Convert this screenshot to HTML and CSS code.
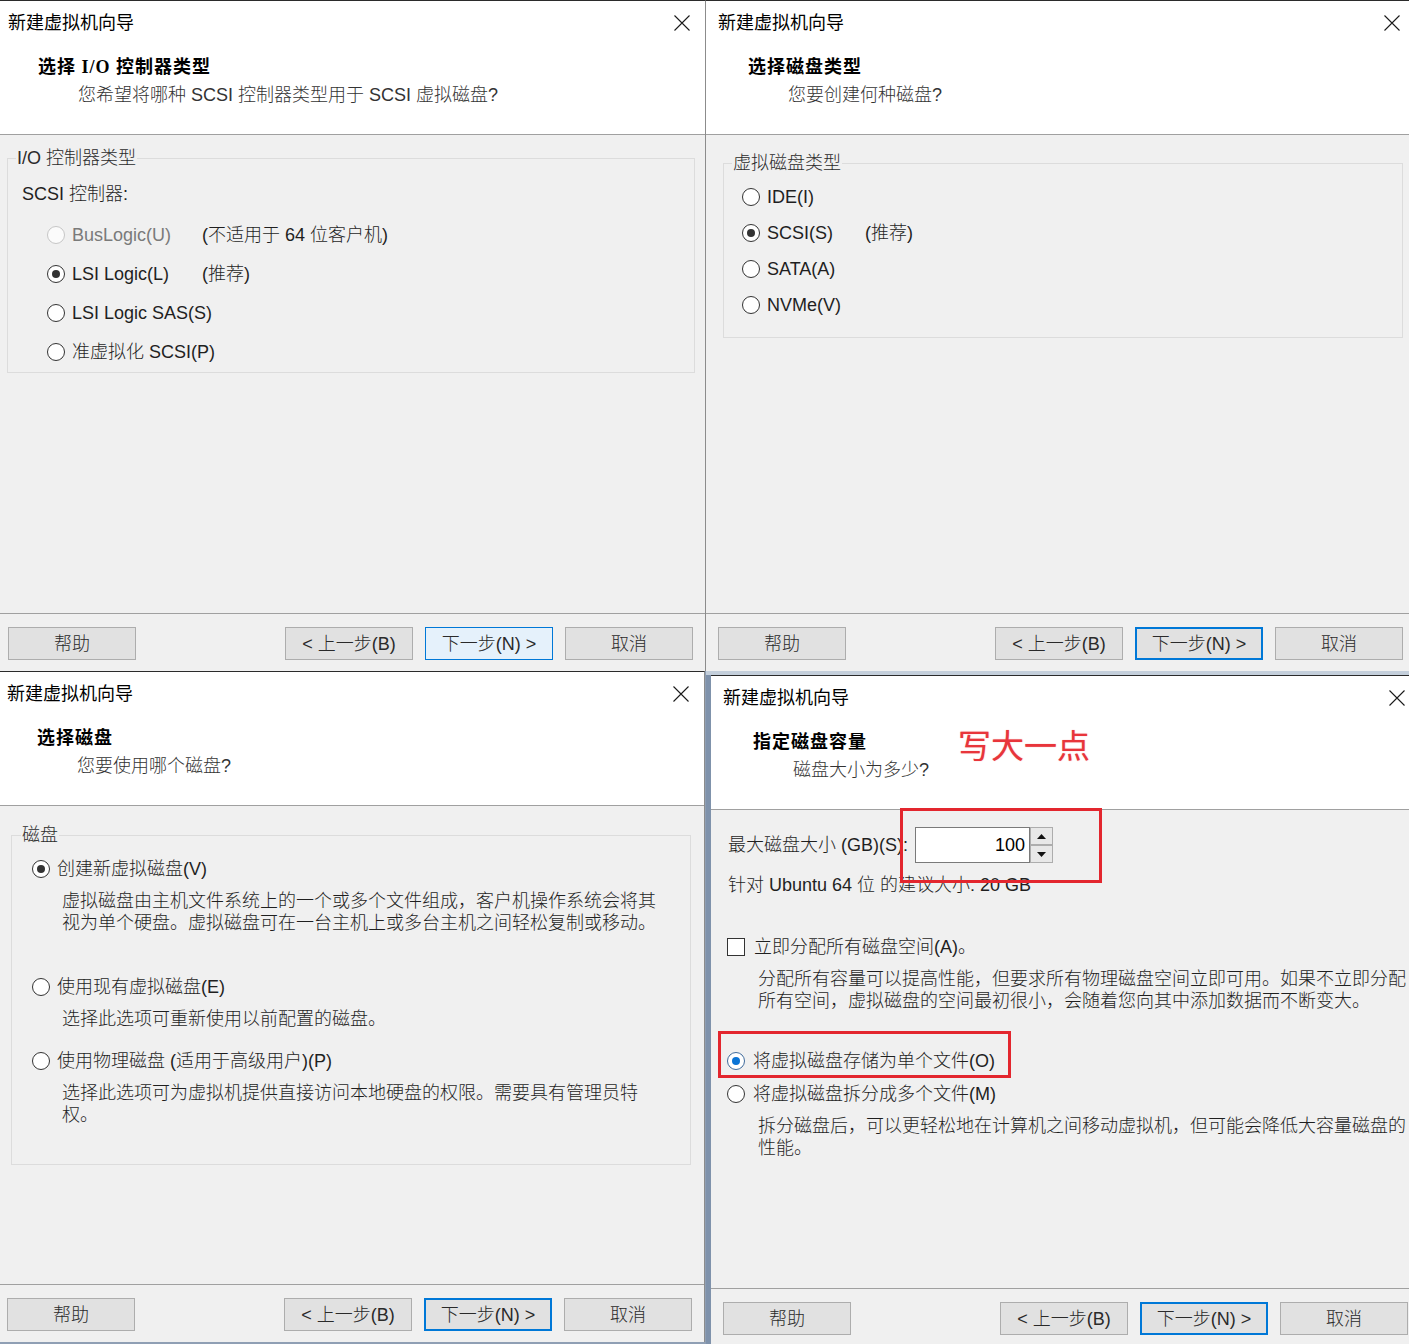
FILE: index.html
```html
<!DOCTYPE html>
<html lang="zh-CN">
<head>
    <meta charset="UTF-8">
    <meta name="viewport" content="width=device-width, initial-scale=1.0">
    <title>新建虚拟机向导</title>
    <link rel="stylesheet" href="styles.css">
</head>
<body>
    <div class="sheet">
        <!-- step: I/O controller -->
        <div class="cell cell-tl">
            <section class="wizard wizard-tl">
                <header class="wiz-head">
                    <div class="titlebar">
                        <span class="title">新建虚拟机向导</span>
                        <svg class="close" width="16" height="16" viewBox="0 0 16 16"><path d="M0.5 0.5L15.5 15.5M15.5 0.5L0.5 15.5"/></svg>
                    </div>
                    <h2 class="step-title">选择 I/O 控制器类型</h2>
                    <p class="step-sub">您希望将哪种 SCSI 控制器类型用于 SCSI 虚拟磁盘?</p>
                </header>
                <div class="wiz-body body-io">
                    <fieldset class="group group-io">
                        <legend>I/O 控制器类型</legend>
                        <div class="group-caption">SCSI 控制器:</div>
                        <div class="choices choices-io">
                            <label class="choice is-disabled"><input type="radio" name="io" disabled><span class="choice-label">BusLogic(U)</span><span class="choice-note">(不适用于 64 位客户机)</span></label>
                            <label class="choice"><input type="radio" name="io" checked><span class="choice-label">LSI Logic(L)</span><span class="choice-note">(推荐)</span></label>
                            <label class="choice"><input type="radio" name="io"><span class="choice-label">LSI Logic SAS(S)</span></label>
                            <label class="choice"><input type="radio" name="io"><span class="choice-label">准虚拟化 SCSI(P)</span></label>
                        </div>
                    </fieldset>
                </div>
                <footer class="wiz-foot">
                    <button class="btn">帮助</button>
                    <span class="spacer"></span>
                    <button class="btn">&lt; 上一步(B)</button>
                    <button class="btn btn-default">下一步(N) &gt;</button>
                    <button class="btn">取消</button>
                </footer>
            </section>
        </div>

        <!-- step: disk type -->
        <div class="cell cell-tr">
            <section class="wizard wizard-tr">
                <header class="wiz-head">
                    <div class="titlebar">
                        <span class="title">新建虚拟机向导</span>
                        <svg class="close" width="16" height="16" viewBox="0 0 16 16"><path d="M0.5 0.5L15.5 15.5M15.5 0.5L0.5 15.5"/></svg>
                    </div>
                    <h2 class="step-title">选择磁盘类型</h2>
                    <p class="step-sub">您要创建何种磁盘?</p>
                </header>
                <div class="wiz-body body-disk">
                    <fieldset class="group group-disk">
                        <legend>虚拟磁盘类型</legend>
                        <div class="choices choices-disk">
                            <label class="choice"><input type="radio" name="bus"><span class="choice-label">IDE(I)</span></label>
                            <label class="choice"><input type="radio" name="bus" checked><span class="choice-label">SCSI(S)</span><span class="choice-note">(推荐)</span></label>
                            <label class="choice"><input type="radio" name="bus"><span class="choice-label">SATA(A)</span></label>
                            <label class="choice"><input type="radio" name="bus"><span class="choice-label">NVMe(V)</span></label>
                        </div>
                    </fieldset>
                </div>
                <footer class="wiz-foot">
                    <button class="btn">帮助</button>
                    <span class="spacer"></span>
                    <button class="btn">&lt; 上一步(B)</button>
                    <button class="btn btn-default">下一步(N) &gt;</button>
                    <button class="btn">取消</button>
                </footer>
            </section>
        </div>

        <!-- step: pick disk -->
        <div class="cell cell-bl">
            <section class="wizard wizard-bl">
                <header class="wiz-head">
                    <div class="titlebar">
                        <span class="title">新建虚拟机向导</span>
                        <svg class="close" width="16" height="16" viewBox="0 0 16 16"><path d="M0.5 0.5L15.5 15.5M15.5 0.5L0.5 15.5"/></svg>
                    </div>
                    <h2 class="step-title">选择磁盘</h2>
                    <p class="step-sub">您要使用哪个磁盘?</p>
                </header>
                <div class="wiz-body body-pick">
                    <fieldset class="group group-pick">
                        <legend>磁盘</legend>
                        <div class="option">
                            <label class="choice"><input type="radio" name="disk" checked><span>创建新虚拟磁盘(V)</span></label>
                            <p class="option-desc">虚拟磁盘由主机文件系统上的一个或多个文件组成，客户机操作系统会将其视为单个硬盘。虚拟磁盘可在一台主机上或多台主机之间轻松复制或移动。</p>
                        </div>
                        <div class="option option-2">
                            <label class="choice"><input type="radio" name="disk"><span>使用现有虚拟磁盘(E)</span></label>
                            <p class="option-desc">选择此选项可重新使用以前配置的磁盘。</p>
                        </div>
                        <div class="option option-3">
                            <label class="choice"><input type="radio" name="disk"><span>使用物理磁盘 (适用于高级用户)(P)</span></label>
                            <p class="option-desc">选择此选项可为虚拟机提供直接访问本地硬盘的权限。需要具有管理员特权。</p>
                        </div>
                    </fieldset>
                </div>
                <footer class="wiz-foot">
                    <button class="btn">帮助</button>
                    <span class="spacer"></span>
                    <button class="btn">&lt; 上一步(B)</button>
                    <button class="btn btn-default">下一步(N) &gt;</button>
                    <button class="btn">取消</button>
                </footer>
            </section>
        </div>

        <!-- step: disk size -->
        <div class="cell cell-br">
            <section class="wizard wizard-br">
                <header class="wiz-head">
                    <div class="titlebar">
                        <span class="title">新建虚拟机向导</span>
                        <svg class="close" width="16" height="16" viewBox="0 0 16 16"><path d="M0.5 0.5L15.5 15.5M15.5 0.5L0.5 15.5"/></svg>
                    </div>
                    <h2 class="step-title">指定磁盘容量</h2>
                    <p class="step-sub">磁盘大小为多少?</p>
                </header>
                <div class="wiz-body body-size">
                    <div class="size-row">
                        <span class="size-label">最大磁盘大小 (GB)(S):</span>
                        <div class="size-field">
                            <input class="size-input" type="text" value="100">
                            <div class="spin">
                                <span><svg width="9" height="5" viewBox="0 0 9 5"><path d="M0 5L4.5 0L9 5Z"/></svg></span>
                                <span><svg width="9" height="5" viewBox="0 0 9 5"><path d="M0 0L4.5 5L9 0Z"/></svg></span>
                            </div>
                        </div>
                    </div>
                    <div class="size-hint">针对 Ubuntu 64 位 的建议大小: 20 GB</div>

                    <label class="choice check-row"><input type="checkbox"><span>立即分配所有磁盘空间(A)。</span></label>
                    <p class="size-desc">分配所有容量可以提高性能，但要求所有物理磁盘空间立即可用。如果不立即分配所有空间，虚拟磁盘的空间最初很小，会随着您向其中添加数据而不断变大。</p>

                    <label class="choice store-1 is-focus"><input type="radio" name="store" checked><span>将虚拟磁盘存储为单个文件(O)</span></label>
                    <label class="choice store-2"><input type="radio" name="store"><span>将虚拟磁盘拆分成多个文件(M)</span></label>
                    <p class="size-desc">拆分磁盘后，可以更轻松地在计算机之间移动虚拟机，但可能会降低大容量磁盘的性能。</p>
                </div>
                <footer class="wiz-foot">
                    <button class="btn">帮助</button>
                    <span class="spacer"></span>
                    <button class="btn">&lt; 上一步(B)</button>
                    <button class="btn btn-default">下一步(N) &gt;</button>
                    <button class="btn">取消</button>
                </footer>

                <!-- hand-drawn annotations -->
                <p class="note-big">写大一点</p>
                <div class="mark mark-size"></div>
                <div class="mark mark-file"></div>
            </section>
        </div>
    </div>
</body>
</html>
```

FILE: styles.css
```css
* { box-sizing: border-box; }
html, body { margin: 0; padding: 0; }
body {
    width: 1409px;
    height: 1344px;
    overflow: hidden;
    font-family: "Liberation Sans", "Noto Sans CJK SC", sans-serif;
    font-size: 18px;
    font-weight: 300;
    color: #1f1f1f;
    background: #f0f0f0;
}
.sheet {
    display: grid;
    grid-template-columns: 706px 703px;
    grid-template-rows: 671px 673px;
}
.cell { overflow: hidden; position: relative; }
.cell-bl { background: #8f9fb4; }
.cell-br {
    padding: 4px 0 0 5px;
    background: linear-gradient(#c4cfdb 0, #c4cfdb 4px, #7f92ab 4px);
}

/* dialog frame */
.wizard {
    --dx: 0px;
    position: relative;
    width: calc(706px + var(--dx));
    height: 671px;
    display: flex;
    flex-direction: column;
    background: #f0f0f0;
    border-top: 1px solid #2b2b2b;
    border-right: 1px solid #8c8c8c;
}
.wizard-tr, .wizard-br { --dx: 4px; }
.wizard-bl { --dx: -1px; }

.wiz-head {
    flex: none;
    height: 134px;
    background: #fff;
    border-bottom: 1px solid #a0a0a0;
}
.titlebar {
    display: flex;
    align-items: center;
    height: 43px;
    padding: 0 15px 0 calc(8px + var(--dx));
}
.title { line-height: 24px; font-weight: 400; color: #000; }
.close { margin-left: auto; fill: none; stroke: #1a1a1a; stroke-width: 1.1; }
.step-title {
    margin: 9px 0 0 calc(38px + var(--dx));
    font: 700 18px/28px "Liberation Serif", "Noto Sans CJK SC", serif;
    letter-spacing: 1px;
    color: #000;
}
.step-sub {
    margin: 0 0 0 calc(78px + var(--dx));
    line-height: 28px;
    color: #333;
}

.wiz-body { flex: 1; }

.wiz-foot {
    flex: none;
    height: 58px;
    display: flex;
    align-items: flex-start;
    gap: 12px;
    padding: 13px 12px 0 calc(8px + var(--dx));
    border-top: 1px solid #a0a0a0;
}
.spacer { flex: 1; }
.btn {
    width: 128px;
    height: 33px;
    padding: 0;
    font: inherit;
    line-height: 24px;
    color: #2a2a2a;
    background: #e1e1e1;
    border: 1px solid #adadad;
}
.btn-default { border: 2px solid #0078d7; }
.wizard-tl .btn-default { border-width: 1px; background: #e5f1fb; }

/* group boxes */
.group {
    margin: 0;
    min-width: 0;
    border: 1px solid #dcdcdc;
}
.group legend { padding: 0 1px; line-height: 22px; color: #2a2a2a; }

.choice { display: flex; align-items: center; line-height: 24px; white-space: nowrap; }
.choice input {
    -webkit-appearance: none;
    appearance: none;
    flex: none;
    display: grid;
    place-content: center;
    width: 18px;
    height: 18px;
    margin: 0 7px 0 0;
    background: #fff;
    border: 1px solid #333;
}
.choice input[type="radio"] { border-radius: 50%; }
.choice input[type="radio"]:checked::before {
    content: "";
    width: 8px;
    height: 8px;
    border-radius: 50%;
    background: #333;
}
.choice.is-disabled .choice-label { color: #7a7a7a; }
.choice.is-disabled input { border-color: #c6c6c6; background: #fbfbfb; }
.choice.is-focus input { border-color: #3f6b9c; }
.choice.is-focus input:checked::before { background: #0a74d6; }

/* I/O controller page */
.body-io { padding: 12px 10px 0 7px; }
.group-io { padding: 13px 0 1px 14px; }
.group-io legend { margin-left: -6px; }
.group-caption { line-height: 24px; }
.choices-io { margin-top: 9px; }
.choices-io .choice { height: 39px; padding-left: 25px; }
.choices-io .choice-label { min-width: 130px; }

/* disk type page */
.body-disk { padding: 17px 12px 0 17px; }
.group-disk { padding: 5px 0 14px 18px; }
.group-disk legend { margin-left: -10px; }
.choices-disk .choice { height: 36px; }
.choices-disk .choice-label { min-width: 98px; }

/* pick disk page */
.body-pick { padding: 18px 13px 0 11px; }
.group-pick { padding: 11px 0 38px 20px; }
.group-pick legend { margin-left: -11px; }
.option .choice { height: 24px; }
.option-2 { margin-top: 41px; }
.option-3 { margin-top: 19px; }
.option-desc {
    width: 600px;
    margin: 9px 0 0 30px;
    line-height: 22px;
}

/* disk size page */
.body-size { padding: 17px 0 0 17px; }
.size-row { display: flex; align-items: center; height: 36px; }
.size-label { width: 187px; line-height: 24px; }
.size-field { display: flex; }
.size-input {
    width: 115px;
    height: 36px;
    padding: 0 4px 0 0;
    font: inherit;
    font-weight: 400;
    color: #000;
    text-align: right;
    background: #fff;
    border: 1px solid #7a7a7a;
    outline: none;
}
.spin { display: flex; flex-direction: column; width: 23px; height: 36px; }
.spin span {
    flex: 1;
    display: grid;
    place-items: center;
    background: #e8e8e8;
    border: 1px solid #adadad;
}
.spin svg { fill: #111; }
.size-hint { margin-top: 11px; line-height: 22px; }
.check-row { height: 24px; margin: 39px 0 0 -1px; }
.check-row input { margin-right: 9px; }
.size-desc {
    width: 650px;
    margin: 9px 0 0 30px;
    line-height: 22px;
}
.store-1 { height: 24px; margin: 37px 0 0 -1px; }
.store-2 { height: 24px; margin: 9px 0 0 -1px; }
.store-1 input, .store-2 input { margin-right: 8px; }

/* red annotations on the last page */
.note-big {
    position: absolute;
    left: 247px;
    top: 52px;
    margin: 0;
    font: 400 33px/1 "Noto Sans CJK SC", sans-serif;
    color: #e8353b;
    text-shadow: 0 0 1px rgba(232, 53, 59, 0.6);
}
.mark { position: absolute; border: 3px solid #e3262e; }
.mark-size { left: 189px; top: 132px; width: 202px; height: 75px; }
.mark-file { left: 7px; top: 355px; width: 293px; height: 47px; }
```
